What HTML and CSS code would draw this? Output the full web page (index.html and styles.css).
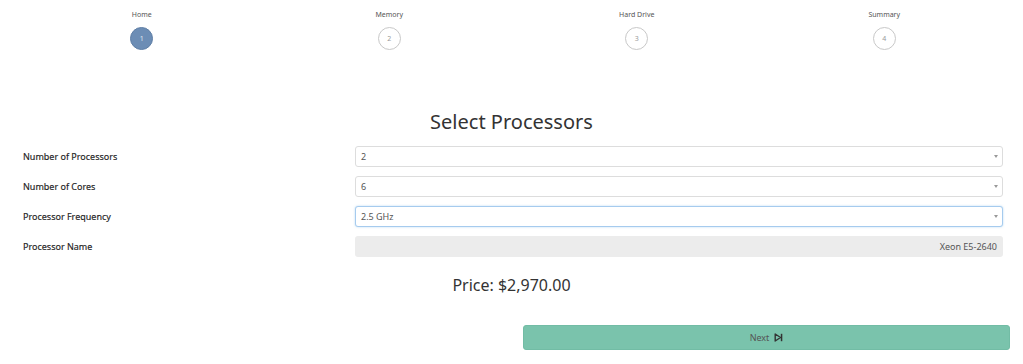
FILE: index.html
```html
<!DOCTYPE html>
<html lang="en">
<head>
    <meta charset="UTF-8">
    <meta name="viewport" content="width=device-width, initial-scale=1.0">
    <title>Select Processors</title>
    <link rel="stylesheet" href="styles.css">
</head>
<body>
    <div id="steps">
        <div class="step">
            <div class="step-label">Home</div>
            <div class="step-circle active">1</div>
        </div>
        <div class="step">
            <div class="step-label">Memory</div>
            <div class="step-circle">2</div>
        </div>
        <div class="step">
            <div class="step-label">Hard Drive</div>
            <div class="step-circle">3</div>
        </div>
        <div class="step">
            <div class="step-label">Summary</div>
            <div class="step-circle">4</div>
        </div>
    </div>

    <h1>Select Processors</h1>

    <div id="form">
        <div class="row">
            <label>Number of Processors</label>
            <div class="select-wrap">
                <select><option>2</option></select>
            </div>
        </div>
        <div class="row">
            <label>Number of Cores</label>
            <div class="select-wrap">
                <select><option>6</option></select>
            </div>
        </div>
        <div class="row">
            <label>Processor Frequency</label>
            <div class="select-wrap">
                <select class="focused"><option>2.5 GHz</option></select>
            </div>
        </div>
        <div class="row">
            <label>Processor Name</label>
            <div class="readonly">Xeon E5-2640</div>
        </div>
    </div>

    <div id="price">Price: $2,970.00</div>

    <div id="actions">
        <button class="next">Next
            <svg width="9" height="9" viewBox="0 0 9 9">
                <path d="M1.2 1 L6.5 4.5 L1.2 8 Z" fill="none" stroke="#333" stroke-width="1.4" stroke-linejoin="round"/>
                <rect x="6.8" y="0.8" width="1.5" height="7.4" fill="#333"/>
            </svg>
        </button>
    </div>
</body>
</html>
```

FILE: styles.css
```css
body {
    margin: 0;
    font-family: "Noto Sans", "Open Sans", sans-serif;
    color: #333;
    background: white;
}

#steps {
    display: grid;
    grid-template-columns: repeat(4, 1fr);
    width: 990px;
    margin: 0 0 0 18px;
    padding-top: 10px;
}

.step {
    display: flex;
    flex-direction: column;
    align-items: center;
}

.step-label {
    font-size: 7px;
    line-height: 10px;
    color: #555;
}

.step-circle {
    margin-top: 7px;
    width: 21px;
    height: 21px;
    border: 1px solid #c8c8c8;
    border-radius: 50%;
    display: flex;
    align-items: center;
    justify-content: center;
    font-size: 7px;
    color: #999;
}

.step-circle.active {
    background: #6c8db5;
    border-color: #5f7fa6;
    color: #dde6f0;
}

h1 {
    margin: 59px 0 0;
    font-size: 20px;
    font-weight: 400;
    line-height: 26px;
    text-align: center;
    color: #333;
}

#form {
    margin-top: 11px;
    padding-left: 23px;
}

.row {
    display: grid;
    grid-template-columns: 332px 648px;
    align-items: center;
    height: 21px;
    margin-bottom: 9px;
}

label {
    font-size: 9px;
    font-weight: 400;
    color: #222;
    -webkit-text-stroke: 0.15px #222;
}

.select-wrap {
    position: relative;
    height: 21px;
}

.select-wrap::after {
    content: "";
    position: absolute;
    right: 5px;
    top: 9px;
    border-left: 2px solid transparent;
    border-right: 2px solid transparent;
    border-top: 3px solid #999;
}

select {
    appearance: none;
    -webkit-appearance: none;
    display: block;
    box-sizing: border-box;
    width: 100%;
    height: 21px;
    padding: 0 5px;
    border: 1px solid #ddd;
    border-radius: 3px;
    background: white;
    font-family: inherit;
    font-size: 9px;
    color: #555;
}

select.focused {
    border-color: #a6cbee;
    box-shadow: 0 0 2px rgba(102, 175, 233, 0.5);
    outline: none;
}

.readonly {
    box-sizing: border-box;
    height: 21px;
    line-height: 21px;
    padding: 0 6px;
    border-radius: 3px;
    background: #ececec;
    text-align: right;
    font-size: 9px;
    color: #555;
}

#price {
    margin-top: 17px;
    text-align: center;
    font-size: 16px;
    font-weight: 400;
    line-height: 22px;
    color: #333;
}

#actions {
    display: flex;
    justify-content: flex-end;
    padding-right: 13px;
    margin-top: 29px;
}

.next {
    width: 487px;
    height: 25px;
    border: 1px solid #72bca5;
    border-radius: 3px;
    background: #7ac3ac;
    font-family: inherit;
    font-size: 9px;
    color: #555;
    display: flex;
    align-items: center;
    justify-content: center;
    gap: 5px;
}
```
